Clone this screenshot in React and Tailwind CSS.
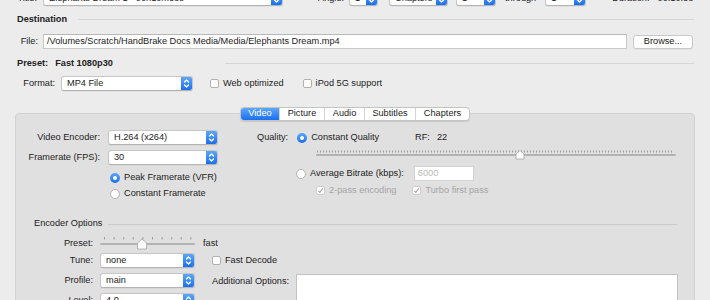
import React from 'react';

const Arrows = () => (
  <svg width="7" height="11" viewBox="0 0 7 11" fill="none" stroke="white" strokeWidth="1.3" strokeLinecap="round" strokeLinejoin="round">
    <path d="M1.5 4 L3.5 2 L5.5 4" />
    <path d="M1.5 7 L3.5 9 L5.5 7" />
  </svg>
);

const Popup = ({ w, text }) => (
  <div className={`${w} h-[15px] flex items-center bg-white border border-[#c6c6c6] border-b-[#b3b3b3] rounded-[3px] shadow-[0_0.5px_0.5px_rgba(0,0,0,0.08)] overflow-hidden`}>
    <span className="flex-1 pl-[5px] truncate leading-none">{text}</span>
    <div className="w-[11px] h-full flex items-center justify-center bg-gradient-to-b from-[#5ca6f9] to-[#1a6ef0]">
      <Arrows />
    </div>
  </div>
);

const Radio = ({ on }) =>
  on ? (
    <div className="w-[10px] h-[10px] rounded-full bg-gradient-to-b from-[#5ca6f9] to-[#1a6ef0] flex items-center justify-center">
      <div className="w-[4px] h-[4px] rounded-full bg-white" />
    </div>
  ) : (
    <div className="w-[10px] h-[10px] rounded-full bg-white border border-[#b4b4b4]" />
  );

const Check = ({ on, disabled }) => (
  <div className={`w-[9px] h-[9px] rounded-[2px] bg-white border flex items-center justify-center ${disabled ? 'border-[#cdcdcd]' : 'border-[#b0b0b0]'}`}>
    {on && (
      <svg width="7" height="7" viewBox="0 0 7 7" fill="none" stroke={disabled ? '#a9a9a9' : '#333'} strokeWidth="1.1">
        <path d="M1.2 3.8 L2.8 5.4 L5.8 1.2" />
      </svg>
    )}
  </div>
);

const Label = ({ w, children }) => (
  <span className={`${w} text-right shrink-0`}>{children}</span>
);

const QualitySlider = () => {
  const ticks = [];
  for (let x = 1; x < 358; x += 3) ticks.push(x);
  return (
    <svg width="360" height="12" viewBox="0 0 360 12">
      {ticks.map((x) => (
        <rect key={x} x={x} y="2.5" width="1" height="2" fill="#9d9d9d" />
      ))}
      <rect x="0" y="6" width="360" height="2" rx="1" fill="#b3b3b3" />
      <path d="M200 11 L200 6 L204 2.5 L208 6 L208 11 Z" fill="white" stroke="#a3a3a3" strokeWidth="0.8" strokeLinejoin="round" />
    </svg>
  );
};

const PresetSlider = () => {
  const ticks = [];
  for (let i = 0; i < 10; i++) ticks.push(4 + i * 9.6);
  return (
    <svg width="95" height="13" viewBox="0 0 95 13">
      {ticks.map((x) => (
        <rect key={x} x={x} y="0" width="1" height="2.5" fill="#9d9d9d" />
      ))}
      <rect x="0" y="6" width="95" height="2" rx="1" fill="#b3b3b3" />
      <path d="M37.5 12 L37.5 6 L42 2 L46.5 6 L46.5 12 Z" fill="white" stroke="#a3a3a3" strokeWidth="0.8" strokeLinejoin="round" />
    </svg>
  );
};

const tabs = [
  ['Video', 'w-[38px]'],
  ['Picture', 'w-[45px]'],
  ['Audio', 'w-[40px]'],
  ['Subtitles', 'w-[51px]'],
  ['Chapters', 'w-[54px]'],
];

export default function App() {
  return (
    <div className="w-[710px] h-[300px] overflow-hidden bg-[#ececec] text-[9.2px] text-[#222] font-['Liberation_Sans',Arial,sans-serif] leading-none">
      {/* source row, cut off at the top */}
      <div className="flex items-center h-[15px] -mt-[9px]">
        <Label w="w-[37px]">Title:</Label>
        <div className="ml-[6px]"><Popup w="w-[240px]" text="Elephants Dream 1 - 00h10m38s" /></div>
        <span className="ml-[35px]">Angle:</span>
        <div className="ml-[5px]"><Popup w="w-[29px]" text="1" /></div>
        <div className="ml-[11px]"><Popup w="w-[59px]" text="Chapters" /></div>
        <div className="ml-[8px]"><Popup w="w-[40px]" text="1" /></div>
        <span className="ml-[9px]">through</span>
        <div className="ml-[9px]"><Popup w="w-[41px]" text="1" /></div>
        <span className="ml-[26px]">Duration:</span>
        <span className="ml-[8px]">00:10:38</span>
      </div>

      {/* destination */}
      <div className="flex items-center h-[13px] mt-[7px] pl-[17px] pr-[16px]">
        <span className="font-bold">Destination</span>
        <div className="flex-1 h-px bg-[#d6d6d6] ml-[11px]" />
      </div>

      <div className="flex items-center h-[15px] mt-[8px]">
        <Label w="w-[38px]">File:</Label>
        <div className="ml-[5px] w-[584px] h-[15px] bg-white border border-[#c8c8c8] border-t-[#b8b8b8] flex items-center pl-[3px]">
          /Volumes/Scratch/HandBrake Docs Media/Media/Elephants Dream.mp4
        </div>
        <div className="ml-[6px] w-[60px] h-[14px] bg-white border border-[#c8c8c8] rounded-[3px] flex items-center justify-center shadow-[0_0.5px_0.5px_rgba(0,0,0,0.08)]">
          Browse...
        </div>
      </div>

      {/* preset */}
      <div className="flex items-center h-[13px] mt-[8px] pl-[17px] pr-[16px]">
        <span className="font-bold">Preset:</span>
        <span className="font-bold ml-[7px]">Fast 1080p30</span>
        <div className="flex-1 h-px bg-[#d6d6d6] ml-[112px]" />
      </div>

      <div className="flex items-center h-[15px] mt-[6px]">
        <Label w="w-[55px]">Format:</Label>
        <div className="ml-[6px]"><Popup w="w-[132px]" text="MP4 File" /></div>
        <div className="ml-[17px]"><Check /></div>
        <span className="ml-[4px]">Web optimized</span>
        <div className="ml-[19px]"><Check /></div>
        <span className="ml-[4px]">iPod 5G support</span>
      </div>

      {/* tabs */}
      <div className="relative z-10 flex justify-center mt-[16px] ml-[15px] w-[680px]">
        <div className="flex h-[14px] bg-white border border-[#c4c4c4] rounded-[4px] overflow-hidden shadow-[0_0.5px_1px_rgba(0,0,0,0.1)]">
          {tabs.map(([t, w], i) => (
            <div
              key={t}
              className={`${w} flex items-center justify-center ${i > 0 ? 'border-l border-[#d4d4d4]' : ''} ${i === 0 ? 'bg-gradient-to-b from-[#5ca6f9] to-[#1a6ef0] text-white' : ''}`}
            >
              {t}
            </div>
          ))}
        </div>
      </div>

      {/* tab panel */}
      <div className="-mt-[8px] ml-[15px] w-[680px] h-[200px] bg-[#e0e0e0] border border-[#d2d2d2] rounded-[4px]">
        <div className="flex pt-[16px]">
          <div className="w-[241px] flex flex-col">
            <div className="flex items-center h-[15px]">
              <Label w="w-[84px]">Video Encoder:</Label>
              <div className="ml-[8px]"><Popup w="w-[110px]" text="H.264 (x264)" /></div>
            </div>
            <div className="flex items-center h-[15px] mt-[5px]">
              <Label w="w-[84px]">Framerate (FPS):</Label>
              <div className="ml-[8px]"><Popup w="w-[110px]" text="30" /></div>
            </div>
            <div className="flex items-center h-[11px] mt-[7px] ml-[94px]">
              <Radio on />
              <span className="ml-[4px]">Peak Framerate (VFR)</span>
            </div>
            <div className="flex items-center h-[11px] mt-[5px] ml-[94px]">
              <Radio />
              <span className="ml-[4px]">Constant Framerate</span>
            </div>
          </div>

          <div className="flex flex-col">
            <div className="flex items-center h-[15px]">
              <span>Quality:</span>
              <div className="ml-[9px]"><Radio on /></div>
              <span className="ml-[4px]">Constant Quality</span>
              <span className="ml-[36px]">RF:</span>
              <span className="ml-[7px]">22</span>
            </div>
            <div className="ml-[59px] mt-[3px]">
              <QualitySlider />
            </div>
            <div className="flex items-center h-[15px] mt-[6px]">
              <div className="ml-[39px]"><Radio /></div>
              <span className="ml-[4px]">Average Bitrate (kbps):</span>
              <div className="ml-[10px] w-[60px] h-[15px] bg-white border border-[#d2d2d2] flex items-center pl-[3px] text-[#b9b9b9]">
                6000
              </div>
            </div>
            <div className="flex items-center h-[11px] mt-[4px] text-[#a5a5a5]">
              <div className="ml-[59px]"><Check on disabled /></div>
              <span className="ml-[4px]">2-pass encoding</span>
              <div className="ml-[16px]"><Check on disabled /></div>
              <span className="ml-[4px]">Turbo first pass</span>
            </div>
          </div>
        </div>

        {/* encoder options */}
        <div className="flex items-center h-[12px] mt-[19px] pl-[18px] pr-[17px]">
          <span>Encoder Options</span>
          <div className="flex-1 h-px bg-[#cbcbcb] ml-[6px]" />
        </div>

        <div className="flex items-center h-[13px] mt-[7px]">
          <Label w="w-[77px]">Preset:</Label>
          <div className="ml-[7px]"><PresetSlider /></div>
          <span className="ml-[8px]">fast</span>
        </div>

        <div className="flex mt-[3px]">
          <div className="flex flex-col">
            <div className="flex items-center h-[15px]">
              <Label w="w-[77px]">Tune:</Label>
              <div className="ml-[7px]"><Popup w="w-[95px]" text="none" /></div>
            </div>
            <div className="flex items-center h-[15px] mt-[5px]">
              <Label w="w-[77px]">Profile:</Label>
              <div className="ml-[7px]"><Popup w="w-[95px]" text="main" /></div>
            </div>
            <div className="flex items-center h-[15px] mt-[5px]">
              <Label w="w-[77px]">Level:</Label>
              <div className="ml-[7px]"><Popup w="w-[95px]" text="4.0" /></div>
            </div>
          </div>
          <div className="flex flex-col ml-[17px]">
            <div className="flex items-center h-[15px]">
              <Check />
              <span className="ml-[4px]">Fast Decode</span>
            </div>
            <div className="flex mt-[6px]">
              <span className="pt-[3px]">Additional Options:</span>
              <div className="ml-[7px] w-[382px] h-[60px] bg-white border border-[#c2c2c2]" />
            </div>
          </div>
        </div>
      </div>
    </div>
  );
}
